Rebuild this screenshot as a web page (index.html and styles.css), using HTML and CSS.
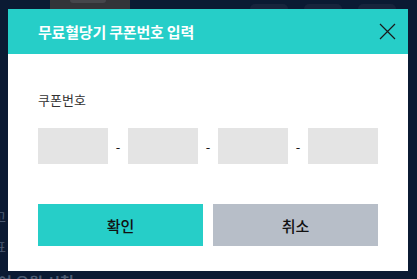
FILE: index.html
```html
<!DOCTYPE html>
<html>
<head>
    <title>쿠폰번호 입력</title>
    <link rel="stylesheet" href="styles.css">
</head>
<body>
    <!-- page behind the popup -->
    <div class="backdrop">
        <div class="top-bar">
            <div class="thumb"><div class="thumb-inner"></div></div>
            <div class="pills">
                <span class="pill"></span>
                <span class="pill"></span>
                <span class="pill"></span>
            </div>
        </div>
        <div class="side-text side-1">고</div>
        <div class="side-text side-2">표</div>
        <div class="bottom-text">여 오월 시청</div>
    </div>

    <!-- Coupon popup -->
    <div class="modal">
        <div class="modal-header">
            <h2>무료혈당기 쿠폰번호 입력</h2>
            <button class="close-btn" aria-label="닫기">
                <svg width="17" height="17" viewBox="0 0 17 17">
                    <path d="M1 1 L16 16 M16 1 L1 16" stroke="#1a1a1a" stroke-width="1.2" fill="none"/>
                </svg>
            </button>
        </div>
        <div class="modal-body">
            <p class="label">쿠폰번호</p>
            <div class="coupon-row">
                <input class="coupon-input" type="text" maxlength="4">
                <span class="dash">-</span>
                <input class="coupon-input" type="text" maxlength="4">
                <span class="dash">-</span>
                <input class="coupon-input" type="text" maxlength="4">
                <span class="dash">-</span>
                <input class="coupon-input" type="text" maxlength="4">
            </div>
            <div class="buttons">
                <button class="btn btn-ok">확인</button>
                <button class="btn btn-cancel">취소</button>
            </div>
        </div>
    </div>
</body>
</html>
```

FILE: styles.css
```css
html, body {
    margin: 0;
    height: 100%;
}
body {
    font-family: "Noto Sans CJK KR", "Noto Sans", sans-serif;
    background-color: #0b1a33;
    overflow: hidden;
}
.backdrop {
    height: 100vh;
    overflow: hidden;
    color: #4b5a72;
}
.top-bar {
    display: flex;
    height: 9px;
}
.thumb {
    width: 80px;
    margin-left: 50px;
    background-color: #333438;
}
.thumb-inner {
    width: 36px;
    height: 3px;
    margin-left: 20px;
    background-color: #45464b;
    border-radius: 0 0 6px 6px;
}
.pills {
    display: flex;
    gap: 16px;
    margin-left: 120px;
    padding-top: 4px;
}
.pill {
    width: 38px;
    height: 5px;
    border-radius: 6px 6px 0 0;
    background-color: #17243c;
}
.side-text {
    font-size: 13px;
    margin-left: -6px;
    line-height: 14px;
}
.side-1 {
    margin-top: 201px;
}
.side-2 {
    margin-top: 16px;
}
.bottom-text {
    font-size: 15px;
    font-weight: bold;
    line-height: 16px;
    margin-top: 20px;
    margin-left: -2px;
}

.modal {
    position: fixed;
    top: 9px;
    left: 8px;
    width: 400px;
    background-color: #fff;
}
.modal-header {
    display: flex;
    align-items: center;
    justify-content: space-between;
    height: 45px;
    padding: 0 12px 0 30px;
    background-color: #26cec8;
}
.modal-header h2 {
    margin: 0;
    color: #fff;
    font-size: 15px;
    font-weight: bold;
    letter-spacing: -0.2px;
}
.close-btn {
    border: none;
    background: none;
    padding: 0;
    width: 17px;
    height: 17px;
    cursor: pointer;
}
.close-btn svg {
    display: block;
}
.modal-body {
    padding: 38px 30px 25px 30px;
}
.label {
    margin: 0;
    font-size: 13px;
    line-height: 16px;
    color: #333;
}
.coupon-row {
    display: flex;
    align-items: center;
    margin-top: 20px;
}
.coupon-input {
    width: 70px;
    height: 36px;
    box-sizing: border-box;
    border: none;
    background-color: #e4e4e4;
    padding: 0 8px;
    font-size: 14px;
}
.dash {
    width: 20px;
    text-align: center;
    font-size: 13px;
    color: #111;
}
.buttons {
    display: flex;
    gap: 10px;
    margin-top: 40px;
}
.btn {
    flex: 1;
    height: 42px;
    border: none;
    font-family: inherit;
    font-size: 15px;
    font-weight: 500;
    color: #111;
    cursor: pointer;
}
.btn-ok {
    background-color: #26cec8;
}
.btn-cancel {
    background-color: #b7bec8;
}
```
